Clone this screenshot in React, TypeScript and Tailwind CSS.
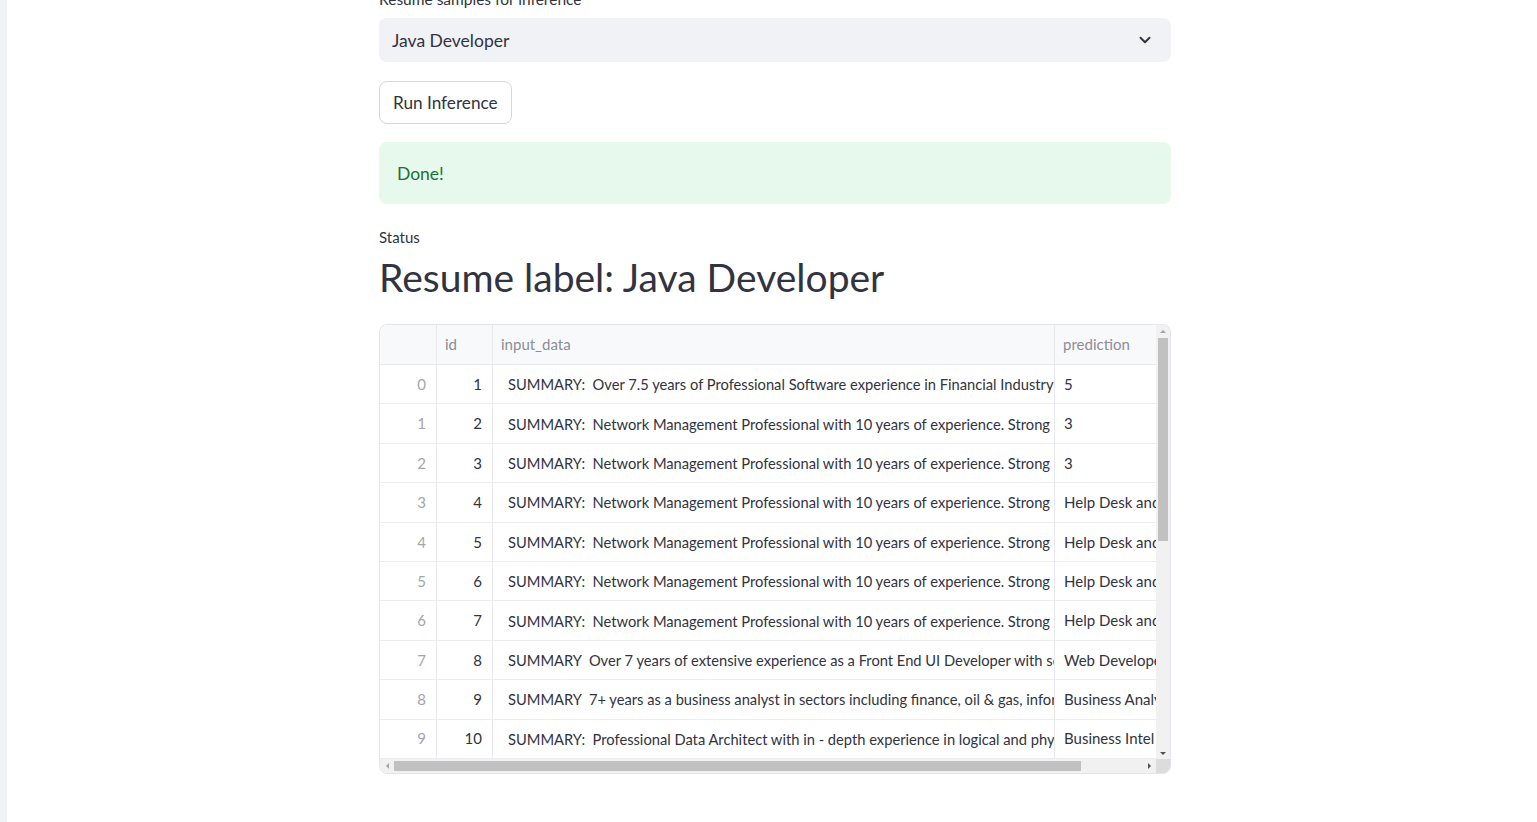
import { ChevronDown } from "lucide-react";

type Row = { idx: number; id: number; text: string; pred: string };

const NET = "SUMMARY:  Network Management Professional with 10 years of experience. Strong c";

const rows: Row[] = [
  { idx: 0, id: 1, text: "SUMMARY:  Over 7.5 years of Professional Software experience in Financial Industry i", pred: "5" },
  { idx: 1, id: 2, text: NET, pred: "3" },
  { idx: 2, id: 3, text: NET, pred: "3" },
  { idx: 3, id: 4, text: NET, pred: "Help Desk and" },
  { idx: 4, id: 5, text: NET, pred: "Help Desk and" },
  { idx: 5, id: 6, text: NET, pred: "Help Desk and" },
  { idx: 6, id: 7, text: NET, pred: "Help Desk and" },
  { idx: 7, id: 8, text: "SUMMARY  Over 7 years of extensive experience as a Front End UI Developer with sol", pred: "Web Develope" },
  { idx: 8, id: 9, text: "SUMMARY  7+ years as a business analyst in sectors including finance, oil & gas, infor", pred: "Business Analy" },
  { idx: 9, id: 10, text: "SUMMARY:  Professional Data Architect with in - depth experience in logical and phys", pred: "Business Intel" },
];

const DataTable = () => {
  return (
    <div className="h-[450px] w-[792px] rounded-[8px] border border-[#e4e5ea] overflow-hidden flex flex-col bg-white text-[15px]">
      <div className="flex flex-1 min-h-0">
        <div className="flex-1 min-w-0 overflow-hidden">
          {/* header */}
          <div className="grid grid-cols-[57px_56px_562px_1fr] h-[40px] bg-[#f8f9fb] text-[#8c8e98] border-b border-[#e8e9ee]">
            <div className="border-r border-[#e8e9ee]"></div>
            <div className="border-r border-[#e8e9ee] flex items-center pl-[8px]">id</div>
            <div className="border-r border-[#e8e9ee] flex items-center pl-[8px]">input_data</div>
            <div className="flex items-center pl-[8px] whitespace-nowrap overflow-hidden">prediction</div>
          </div>
          {rows.map((r) => (
            <div key={r.idx} className="grid grid-cols-[57px_56px_562px_1fr] h-[39.4px] border-b border-[#ecedf1] text-[#31333f]">
              <div className="border-r border-[#e8e9ee] flex items-center justify-end pr-[10px] text-[#a3a5ae]">{r.idx}</div>
              <div className="border-r border-[#e8e9ee] flex items-center justify-end pr-[10px]">{r.id}</div>
              <div className="border-r border-[#e8e9ee] flex items-center pl-[15px] whitespace-pre overflow-hidden text-[14.7px]">{r.text}</div>
              <div className="flex items-center pl-[9px] whitespace-nowrap overflow-hidden">{r.pred}</div>
            </div>
          ))}
        </div>
        {/* vertical scrollbar */}
        <div className="w-[14px] bg-[#f1f1f1] flex flex-col items-center">
          <div className="h-[12px] flex items-center justify-center">
            <div className="w-0 h-0 border-l-[3px] border-r-[3px] border-b-[3px] border-l-transparent border-r-transparent border-b-[#a3a3a3]"></div>
          </div>
          <div className="w-[10px] h-[203px] bg-[#c1c1c1] mt-[1px]"></div>
          <div className="flex-1"></div>
          <div className="h-[12px] flex items-center justify-center">
            <div className="w-0 h-0 border-l-[3px] border-r-[3px] border-t-[3px] border-l-transparent border-r-transparent border-t-[#505050]"></div>
          </div>
        </div>
      </div>
      {/* horizontal scrollbar */}
      <div className="h-[14px] flex bg-[#f1f1f1]">
        <div className="flex-1 flex items-center">
          <div className="w-[14px] flex items-center justify-center">
            <div className="w-0 h-0 border-t-[3px] border-b-[3px] border-r-[3px] border-t-transparent border-b-transparent border-r-[#a3a3a3]"></div>
          </div>
          <div className="w-[687px] h-[10px] bg-[#c1c1c1]"></div>
          <div className="flex-1"></div>
          <div className="w-[14px] flex items-center justify-center">
            <div className="w-0 h-0 border-t-[3px] border-b-[3px] border-l-[3px] border-t-transparent border-b-transparent border-l-[#505050]"></div>
          </div>
        </div>
        <div className="w-[14px] bg-[#dcdcdc]"></div>
      </div>
    </div>
  );
};

export default function App() {
  return (
    <div
      className="h-[822px] w-full overflow-hidden flex bg-white text-[#31333f] text-[15.75px]"
      style={{ fontFamily: "Lato, 'Open Sans', sans-serif" }}
    >
      <div className="w-[7px] shrink-0 bg-[#f0f2f6]"></div>
      <main className="flex-1 pl-[372px]">
        <div className="w-[792px] flex flex-col">
          <label className="block leading-[20px] -mt-[11px] mb-[9px] text-[15.5px]">Resume samples for inference</label>

          <div className="h-[44px] rounded-[8px] bg-[#f0f2f6] flex items-center justify-between pl-[13px] pr-[17px] text-[17.5px]">
            <span className="pt-[2px]">Java Developer</span>
            <ChevronDown size={18} strokeWidth={2.6} className="text-[#31333f]" />
          </div>

          <button className="mt-[19px] self-start h-[43px] px-[13px] rounded-[8px] border border-[#d5d6dc] bg-white text-[17.2px] text-[#31333f]">
            Run Inference
          </button>

          <div className="mt-[18px] h-[62px] rounded-[8px] bg-[#e7f8ec] flex items-center pl-[18px] pt-[2px] text-[17.5px] text-[#177233]">
            Done!
          </div>

          <p className="mt-[23px] leading-[20px] text-[15px]">Status</p>
          <h2 className="mt-[5px] text-[39px] leading-[50px] text-[#31333f]">Resume label: Java Developer</h2>

          <div className="mt-[22px]">
            <DataTable />
          </div>
        </div>
      </main>
    </div>
  );
}
